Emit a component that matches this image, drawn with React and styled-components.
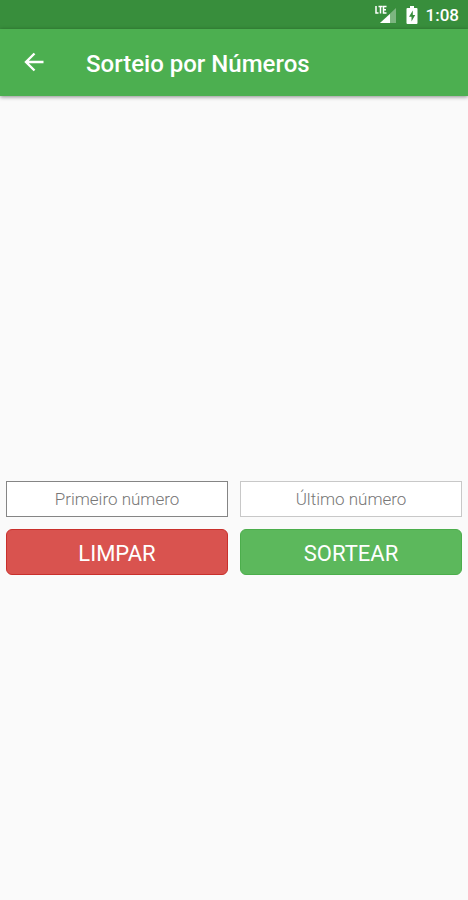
import React from "react";
import styled, { createGlobalStyle } from "styled-components";

const GlobalStyle = createGlobalStyle`
  * {
    box-sizing: border-box;
  }

  body {
    margin: 0;
    background: #fafafa;
    font-family: Roboto, "Liberation Sans", sans-serif;
  }
`;

const Screen = styled.div`
  display: flex;
  flex-direction: column;
  min-height: 100vh;
`;

const StatusBar = styled.div`
  display: flex;
  align-items: center;
  justify-content: flex-end;
  height: 29px;
  padding: 1px 9px 0 0;
  background: #388e3c;
  color: #ffffff;
`;

const Clock = styled.span`
  margin-left: 8px;
  font-size: 17px;
  font-weight: 500;
  line-height: 20px;
`;

const SignalIcon = styled.svg`
  width: 22px;
  height: 20px;
`;

const BatteryIcon = styled.svg`
  width: 12px;
  height: 18px;
  margin-left: 9px;
`;

const Toolbar = styled.header`
  display: flex;
  align-items: center;
  height: 67px;
  padding: 0 22px 2px;
  background: #4caf50;
  color: #ffffff;
  box-shadow: 0 1px 4px rgba(0, 0, 0, 0.45);
`;

const BackButton = styled.button`
  display: flex;
  padding: 0;
  border: 0;
  background: none;
  color: inherit;
  cursor: pointer;

  svg {
    width: 24px;
    height: 24px;
  }
`;

const Title = styled.h1`
  margin: 4px 0 0 40px;
  font-size: 24px;
  font-weight: 500;
  line-height: 28px;
`;

const Content = styled.main`
  display: flex;
  flex: 1;
  flex-direction: column;
  justify-content: center;
  padding: 60px 6px 0;
`;

const Form = styled.form`
  display: grid;
  grid-template-columns: 1fr 1fr;
  gap: 12px;
`;

const NumberInput = styled.input`
  width: 100%;
  height: 36px;
  padding: 0 8px;
  border: 1px solid ${(props) => (props.$active ? "#858585" : "#c8c8c8")};
  border-radius: 0;
  outline: 0;
  background: #ffffff;
  color: #444444;
  font-family: inherit;
  font-size: 17px;
  font-weight: 300;
  text-align: center;

  &::placeholder {
    color: #777777;
    opacity: 1;
  }
`;

const colors = {
  danger: { fill: "#d9534f", edge: "#c9302c" },
  success: { fill: "#5cb85c", edge: "#4cae4c" },
};

const Button = styled.button`
  height: 46px;
  padding: 3px 0 0;
  border: 1px solid ${(props) => colors[props.$variant].edge};
  border-radius: 6px;
  background: ${(props) => colors[props.$variant].fill};
  color: #ffffff;
  font-family: inherit;
  font-size: 22px;
  line-height: 28px;
  cursor: pointer;
`;

const Signal = () => (
  <SignalIcon viewBox="0 0 22 20" aria-hidden="true">
    <path d="M21 3v15H5z" fill="#ffffff" opacity="0.35" />
    <path d="M15 9v9H5z" fill="#ffffff" />
    <path
      d="M1 1v7h2.500M3.500 1.500h4M5.500 1.500v7M11.500 1.500H8.500v6.500h3M8.500 4.700h2.500"
      fill="none"
      stroke="#ffffff"
      strokeWidth="1.500"
    />
  </SignalIcon>
);

const Battery = () => (
  <BatteryIcon viewBox="0 0 12 18" aria-hidden="true">
    <path
      d="M4 0h4v2h2.500q1 0 1 1v14q0 1-1 1h-9q-1 0-1-1V3q0-1 1-1H4z"
      fill="#ffffff"
    />
    <path d="M6.800 4.500 3 10.800h2.500v4.700L9.200 9H6.800z" fill="#388e3c" />
  </BatteryIcon>
);

const App = () => {
  const [first, setFirst] = React.useState("");
  const [last, setLast] = React.useState("");

  const clear = () => {
    setFirst("");
    setLast("");
  };

  return (
    <Screen>
      <GlobalStyle />
      <StatusBar>
        <Signal />
        <Battery />
        <Clock>1:08</Clock>
      </StatusBar>
      <Toolbar>
        <BackButton type="button" aria-label="Voltar">
          <svg viewBox="0 0 24 24" aria-hidden="true">
            <path
              d="M21.500 12H4M12.500 3.500 4 12l8.500 8.500"
              fill="none"
              stroke="currentColor"
              strokeWidth="2.400"
            />
          </svg>
        </BackButton>
        <Title>Sorteio por Números</Title>
      </Toolbar>
      <Content>
        <Form onSubmit={(e) => e.preventDefault()}>
          <NumberInput
            $active
            inputMode="numeric"
            aria-label="Primeiro número"
            placeholder="Primeiro número"
            value={first}
            onChange={(e) => setFirst(e.target.value)}
          />
          <NumberInput
            inputMode="numeric"
            aria-label="Último número"
            placeholder="Último número"
            value={last}
            onChange={(e) => setLast(e.target.value)}
          />
          <Button type="button" $variant="danger" onClick={clear}>
            LIMPAR
          </Button>
          <Button type="submit" $variant="success">
            SORTEAR
          </Button>
        </Form>
      </Content>
    </Screen>
  );
};

export default App;
